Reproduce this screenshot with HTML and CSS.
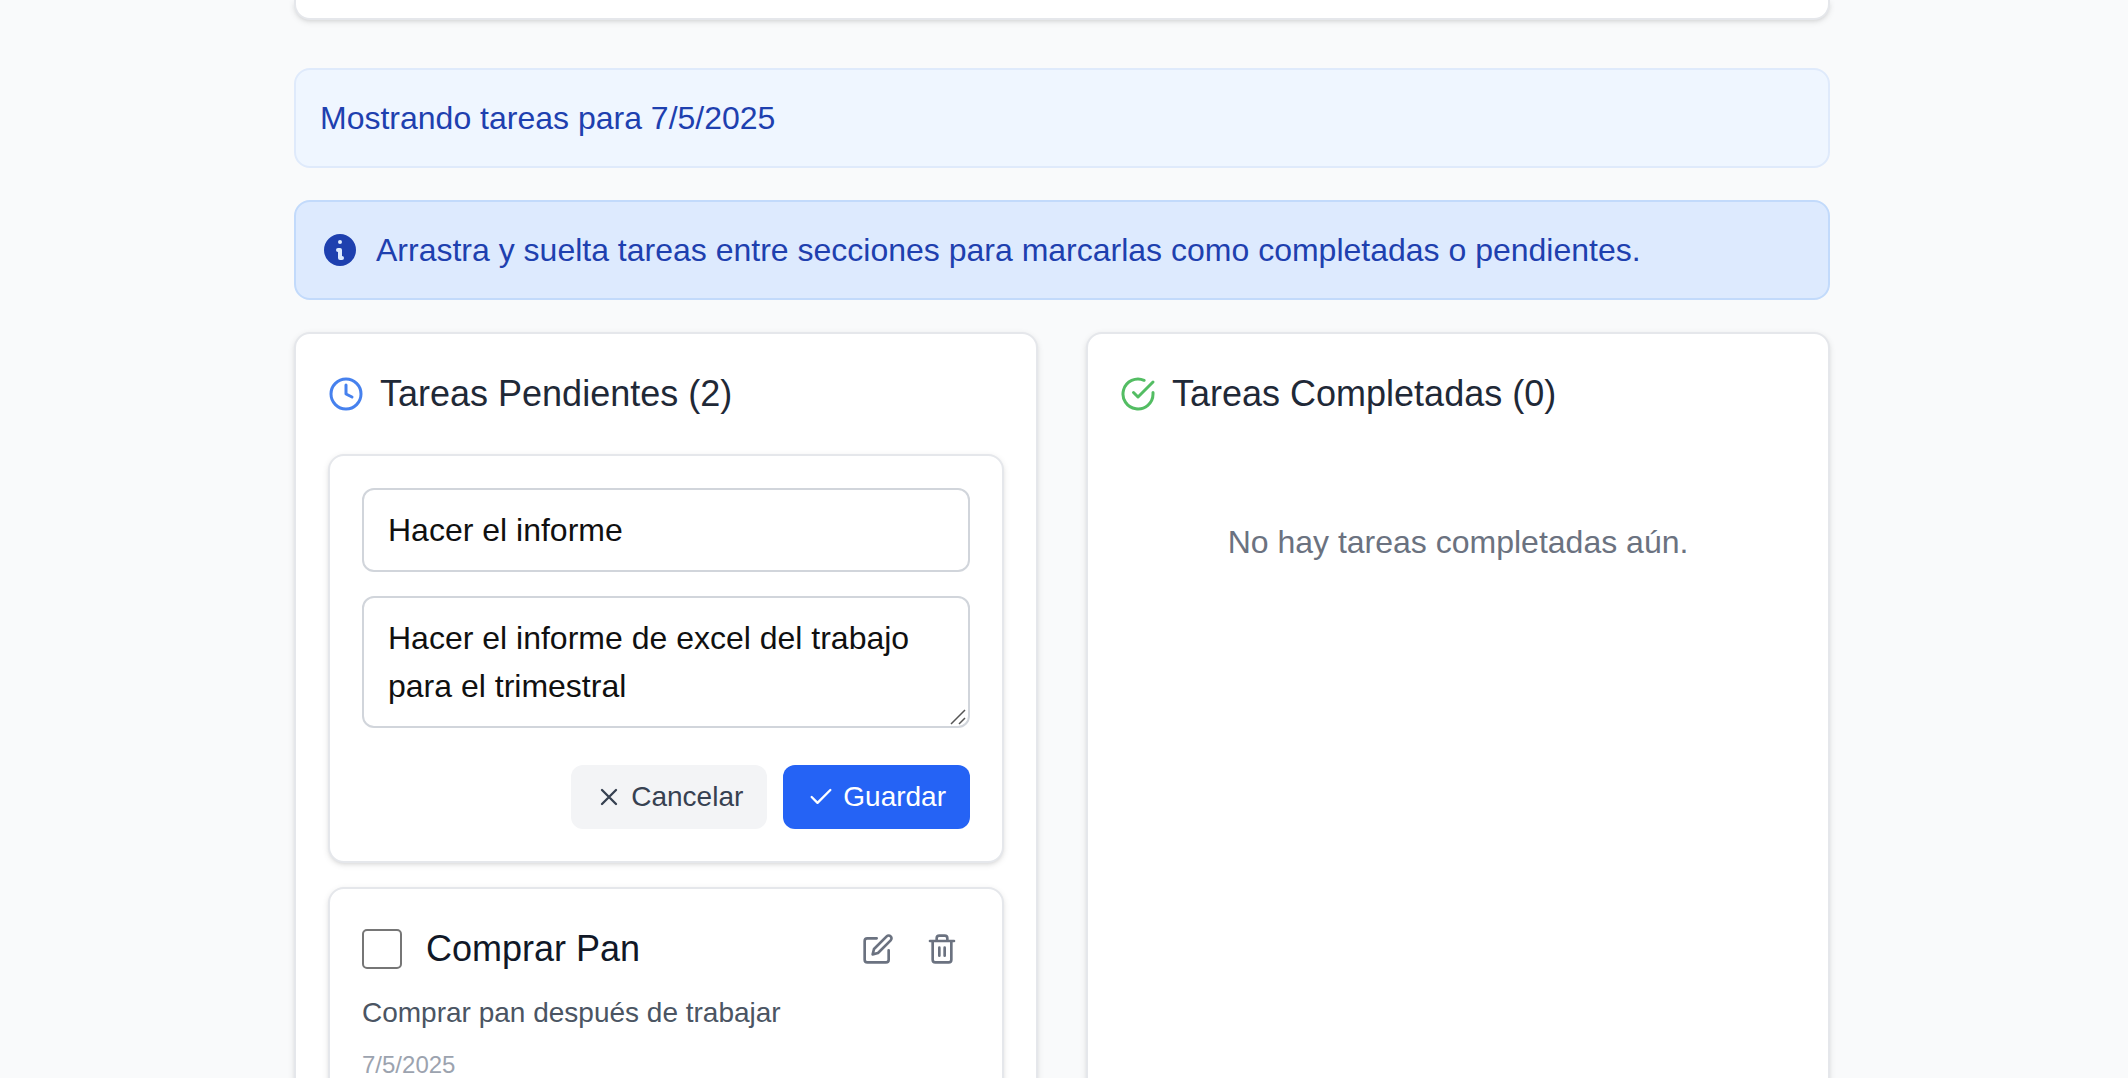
FILE: index.html
```html
<!DOCTYPE html>
<html lang="es">
<head>
<meta charset="utf-8">
<title>Tareas</title>
<link rel="stylesheet" href="styles.css">
</head>
<body>
<main class="page">
  <section class="card top-card"></section>
  <div class="banner banner-date"><span>Mostrando tareas para 7/5/2025</span></div>
  <div class="banner banner-hint">
    <svg class="icon-info" viewBox="0 0 20 20" fill="currentColor"><path fill-rule="evenodd" clip-rule="evenodd" d="M18 10a8 8 0 1 1-16 0 8 8 0 0 1 16 0zm-7-4a1 1 0 1 1-2 0 1 1 0 0 1 2 0zM9 9a1 1 0 0 0 0 2v3a1 1 0 0 0 1 1h1a1 1 0 1 0 0-2v-3a1 1 0 0 0-1-1H9z"/></svg>
    <span>Arrastra y suelta tareas entre secciones para marcarlas como completadas o pendientes.</span>
  </div>
  <div class="columns">
    <section class="card column">
      <h2 class="column-title">
        <svg class="icon icon-title blue" viewBox="0 0 24 24"><circle cx="12" cy="12" r="10"/><path d="M12 6v6l4 2"/></svg>
        <span>Tareas Pendientes (2)</span>
      </h2>
      <div class="card task task-form">
        <input class="field" type="text" value="Hacer el informe">
        <div class="area-wrap">
          <textarea class="field area" rows="2">Hacer el informe de excel del trabajo para el trimestral</textarea>
          <svg class="grip" viewBox="0 0 16 16"><path d="M1 15 15 1M9 15l6-6"/></svg>
        </div>
        <div class="form-actions">
          <button class="btn btn-cancel"><svg class="icon icon-x" viewBox="0 0 24 24"><path d="M18 6 6 18M6 6l12 12"/></svg><span>Cancelar</span></button>
          <button class="btn btn-save"><svg class="icon icon-check" viewBox="0 0 24 24"><path d="M20 6 9 17l-5-5"/></svg><span>Guardar</span></button>
        </div>
      </div>
      <article class="card task">
        <div class="task-head">
          <input class="check" type="checkbox" aria-label="Completar">
          <h3 class="task-title">Comprar Pan</h3>
          <div class="task-tools">
            <button class="tool" aria-label="Editar"><svg class="icon icon-tool" viewBox="0 0 24 24"><path d="M11 4H4a2 2 0 0 0-2 2v14a2 2 0 0 0 2 2h14a2 2 0 0 0 2-2v-7"/><path d="M18.5 2.5a2.121 2.121 0 0 1 3 3L12 15l-4 1 1-4 9.5-9.5z"/></svg></button>
            <button class="tool" aria-label="Eliminar"><svg class="icon icon-tool" viewBox="0 0 24 24"><path d="M3 6h18M19 6v14a2 2 0 0 1-2 2H7a2 2 0 0 1-2-2V6m3 0V4a2 2 0 0 1 2-2h4a2 2 0 0 1 2 2v2M10 11v6M14 11v6"/></svg></button>
          </div>
        </div>
        <p class="task-text">Comprar pan después de trabajar</p>
        <p class="task-date">7/5/2025</p>
      </article>
    </section>
    <section class="card column">
      <h2 class="column-title">
        <svg class="icon icon-title green" viewBox="0 0 24 24"><path d="M22 11.08V12a10 10 0 1 1-5.93-9.14"/><path d="M22 4 12 14.01l-3-3"/></svg>
        <span>Tareas Completadas (0)</span>
      </h2>
      <p class="empty">No hay tareas completadas aún.</p>
    </section>
  </div>
</main>
</body>
</html>
```
FILE: styles.css
```css
* { box-sizing: border-box; margin: 0; padding: 0; }
html, body { height: 100%; overflow: hidden; }
body {
  background: #f9fafb;
  font: 400 32px/48px "Liberation Sans", Arial, sans-serif;
  -webkit-font-smoothing: antialiased;
}
.page { width: 1536px; margin: 0 0 0 294px; display: flex; flex-direction: column; }
.card {
  background: #fff;
  border: 2px solid #e5e7eb;
  border-radius: 16px;
  box-shadow: 0 2px 6px rgba(0, 0, 0, .1), 0 2px 4px -2px rgba(0, 0, 0, .1);
}
.top-card { height: 20px; border-top: 0; border-radius: 0 0 16px 16px; margin-bottom: 48px; }
.banner {
  display: flex;
  align-items: center;
  gap: 16px;
  padding: 24px;
  margin-bottom: 32px;
  border: 2px solid;
  border-radius: 16px;
  color: #1e40af;
}
.banner-date { background: #eff6ff; border-color: #dfeafb; }
.banner-hint { background: #ddeafe; border-color: #c2dafb; }
.icon-info { width: 40px; height: 40px; }
.columns { display: grid; grid-template-columns: 1fr 1fr; gap: 48px; }
.column { padding: 32px; height: 800px; }
.column-title {
  display: flex;
  align-items: center;
  gap: 16px;
  margin-bottom: 32px;
  font-size: 36px;
  font-weight: 400;
  line-height: 56px;
  color: #1f2937;
}
.icon { fill: none; stroke: currentColor; stroke-width: 2; stroke-linecap: round; stroke-linejoin: round; flex: none; }
.icon-title { width: 36px; height: 36px; }
.blue { color: #4681ee; }
.green { color: #53bd63; }
.task { padding: 32px; margin-bottom: 24px; }
.task-form { display: flex; flex-direction: column; }
.field {
  width: 100%;
  height: 84px;
  padding: 16px 24px;
  margin-bottom: 24px;
  border: 2px solid #d1d5db;
  border-radius: 12px;
  background: #fff;
  color: #101010;
  font: inherit;
  outline: none;
}
.area-wrap { position: relative; margin-bottom: 37px; }
.area { display: block; height: 132px; margin-bottom: 0; resize: none; overflow: hidden; }
.grip { position: absolute; right: 4px; bottom: 3px; width: 16px; height: 16px; fill: none; stroke: #555; stroke-width: 1.5; }
.form-actions { display: flex; justify-content: flex-end; gap: 16px; }
.btn {
  display: flex;
  align-items: center;
  gap: 8px;
  height: 64px;
  padding: 0 24px;
  border: 0;
  border-radius: 12px;
  font: 400 28px/40px "Liberation Sans", Arial, sans-serif;
}
.btn-cancel { background: #f3f4f6; color: #374151; }
.btn-save { background: #2563f5; color: #fff; }
.icon-x, .icon-check { width: 28px; height: 28px; }
.task-head { display: flex; align-items: center; gap: 24px; height: 56px; }
.check { appearance: none; width: 40px; height: 40px; border: 2px solid #767676; border-radius: 5px; background: #fff; }
.task-title { flex: 1; font-size: 36px; font-weight: 400; line-height: 56px; color: #111827; }
.task-tools { display: flex; gap: 8px; }
.tool { display: flex; padding: 12px; border: 0; background: none; color: #6b7280; }
.icon-tool { width: 32px; height: 32px; }
.task-text { margin-top: 16px; font-size: 28px; line-height: 40px; color: #4b5563; }
.task-date { margin-top: 16px; font-size: 24px; line-height: 32px; color: #9ca3af; }
.empty { padding-top: 64px; text-align: center; color: #6b7280; }
```
